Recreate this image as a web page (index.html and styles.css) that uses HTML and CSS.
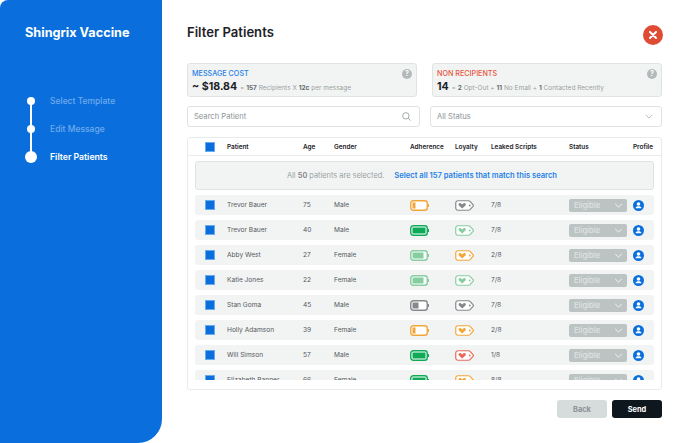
FILE: index.html
```html
<!DOCTYPE html>
<html lang="en">
<head>
  <meta charset="UTF-8" />
  <meta name="viewport" content="width=device-width, initial-scale=1" />
  <title>Filter Patients</title>
  <link rel="stylesheet" href="styles.css">
</head>
<body>
<svg class="sprites" width="0" height="0">
  <symbol id="batt-low" viewBox="0 0 19 11">
    <rect x="0.75" y="0.75" width="16.5" height="9.5" rx="2.5" fill="#fff" stroke="currentColor" stroke-width="1.4"/>
    <rect x="17.8" y="4" width="1.2" height="3" fill="currentColor"/>
    <rect x="2.5" y="2.5" width="3" height="6" fill="currentColor"/>
  </symbol>
  <symbol id="batt-half" viewBox="0 0 19 11">
    <rect x="0.75" y="0.75" width="16.5" height="9.5" rx="2.5" fill="#fff" stroke="currentColor" stroke-width="1.4"/>
    <rect x="17.8" y="4" width="1.2" height="3" fill="currentColor"/>
    <rect x="2.5" y="2.5" width="6" height="6" fill="currentColor"/>
  </symbol>
  <symbol id="batt-most" viewBox="0 0 19 11">
    <rect x="0.75" y="0.75" width="16.5" height="9.5" rx="2.5" fill="#fff" stroke="currentColor" stroke-width="1.4"/>
    <rect x="17.8" y="4" width="1.2" height="3" fill="currentColor"/>
    <rect x="2.5" y="2.5" width="11" height="6" fill="currentColor"/>
  </symbol>
  <symbol id="batt-full" viewBox="0 0 19 11">
    <rect x="0.75" y="0.75" width="16.5" height="9.5" rx="2.5" fill="#fff" stroke="currentColor" stroke-width="1.4"/>
    <rect x="17.8" y="4" width="1.2" height="3" fill="currentColor"/>
    <rect x="2.5" y="2.5" width="13" height="6" fill="currentColor"/>
  </symbol>
  <symbol id="tag" viewBox="0 0 19 11">
    <path d="M3 .75h10.5c.6 0 1.1.2 1.5.6l3 3.2c.4.5.4 1.4 0 1.900l-3 3.2c-.4.4-.9.6-1.500.6H3A2.200 2.200 0 0 1 .75 8V3A2.200 2.200 0 0 1 3 .75z" fill="#fff" stroke="currentColor" stroke-width="1.2"/>
    <path d="M7.200 8.600 3.900 5.400c-1.200-1.400.9-3.200 2.200-1.900l1.100 1 1.100-1c1.300-1.300 3.400.5 2.200 1.900z" fill="currentColor"/>
    <circle cx="14.800" cy="5.500" r=".9" fill="currentColor"/>
  </symbol>
  <symbol id="user" viewBox="0 0 11 11">
    <circle cx="5.500" cy="5.500" r="5.500" fill="#0a6fdc"/>
    <circle cx="5.500" cy="4" r="1.800" fill="#fff"/>
    <path d="M2.500 8.300c0-1.500 1.400-2.100 3-2.100s3 .6 3 2.100z" fill="#fff"/>
  </symbol>
  <symbol id="chev" viewBox="0 0 10 6">
    <path d="M1 1l4 4 4-4" fill="none" stroke="currentColor" stroke-width="1.200"/>
  </symbol>
</svg>

<div class="app">
  <aside class="sidebar">
    <h1 class="brand">Shingrix Vaccine</h1>
    <ul class="steps">
      <li class="step done">Select Template</li>
      <li class="step done">Edit Message</li>
      <li class="step active">Filter Patients</li>
    </ul>
  </aside>

  <main class="main">
    <header class="top">
      <h2 class="title">Filter Patients</h2>
      <button class="close" aria-label="Close">
        <svg width="8" height="8" viewBox="0 0 8 8"><path d="M1 1l6 6M7 1L1 7" stroke="#fff" stroke-width="2" stroke-linecap="round"/></svg>
      </button>
    </header>

    <section class="cards">
      <div class="card">
        <div class="card-label blue">MESSAGE COST</div>
        <div class="card-line"><strong class="big">~ $18.84</strong> = <b>157</b> Recipients X <b>12c</b> per message</div>
        <span class="help">?</span>
      </div>
      <div class="card">
        <div class="card-label red">NON RECIPIENTS</div>
        <div class="card-line"><strong class="big">14</strong> = <b>2</b> Opt-Out + <b>11</b> No Email + <b>1</b> Contacted Recently</div>
        <span class="help">?</span>
      </div>
    </section>

    <section class="filters">
      <div class="field search">
        <span>Search Patient</span>
        <svg class="search-ico" width="9" height="9" viewBox="0 0 11 11"><circle cx="4.700" cy="4.700" r="3.900" fill="none" stroke="#9aa1a3" stroke-width="1.100"/><path d="M7.500 7.500l3 3" stroke="#9aa1a3" stroke-width="1.100"/></svg>
      </div>
      <div class="field status-filter">
        <span>All Status</span>
        <svg class="chev-grey" width="8" height="5"><use href="#chev"/></svg>
      </div>
    </section>

    <section class="table">
      <div class="grid head">
        <span class="check"></span><span>Patient</span><span>Age</span><span>Gender</span><span>Adherence</span><span>Loyalty</span><span>Leaked Scripts</span><span>Status</span><span>Profile</span>
      </div>
      <div class="table-body">
        <div class="banner"><span>All <b>50</b> patients are selected.</span><a class="select-all">Select all 157 patients that match this search</a></div>

        <div class="grid row">
          <span class="check"></span><span>Trevor Bauer</span><span>75</span><span>Male</span>
          <svg class="ico orange"><use href="#batt-low"/></svg><svg class="ico grey"><use href="#tag"/></svg>
          <span>7/8</span><span class="pill">Eligible<svg width="9" height="5"><use href="#chev"/></svg></span><svg class="avatar"><use href="#user"/></svg>
        </div>
        <div class="grid row">
          <span class="check"></span><span>Trevor Bauer</span><span>40</span><span>Male</span>
          <svg class="ico green"><use href="#batt-full"/></svg><svg class="ico mint"><use href="#tag"/></svg>
          <span>7/8</span><span class="pill">Eligible<svg width="9" height="5"><use href="#chev"/></svg></span><svg class="avatar"><use href="#user"/></svg>
        </div>
        <div class="grid row">
          <span class="check"></span><span>Abby West</span><span>27</span><span>Female</span>
          <svg class="ico mint"><use href="#batt-most"/></svg><svg class="ico orange"><use href="#tag"/></svg>
          <span>2/8</span><span class="pill">Eligible<svg width="9" height="5"><use href="#chev"/></svg></span><svg class="avatar"><use href="#user"/></svg>
        </div>
        <div class="grid row">
          <span class="check"></span><span>Katie Jones</span><span>22</span><span>Female</span>
          <svg class="ico mint"><use href="#batt-most"/></svg><svg class="ico mint"><use href="#tag"/></svg>
          <span>7/8</span><span class="pill">Eligible<svg width="9" height="5"><use href="#chev"/></svg></span><svg class="avatar"><use href="#user"/></svg>
        </div>
        <div class="grid row">
          <span class="check"></span><span>Stan Goma</span><span>45</span><span>Male</span>
          <svg class="ico grey"><use href="#batt-half"/></svg><svg class="ico grey"><use href="#tag"/></svg>
          <span>7/8</span><span class="pill">Eligible<svg width="9" height="5"><use href="#chev"/></svg></span><svg class="avatar"><use href="#user"/></svg>
        </div>
        <div class="grid row">
          <span class="check"></span><span>Holly Adamson</span><span>39</span><span>Female</span>
          <svg class="ico orange"><use href="#batt-low"/></svg><svg class="ico orange"><use href="#tag"/></svg>
          <span>2/8</span><span class="pill">Eligible<svg width="9" height="5"><use href="#chev"/></svg></span><svg class="avatar"><use href="#user"/></svg>
        </div>
        <div class="grid row">
          <span class="check"></span><span>Will Simson</span><span>57</span><span>Male</span>
          <svg class="ico green"><use href="#batt-full"/></svg><svg class="ico red"><use href="#tag"/></svg>
          <span>1/8</span><span class="pill">Eligible<svg width="9" height="5"><use href="#chev"/></svg></span><svg class="avatar"><use href="#user"/></svg>
        </div>
        <div class="grid row">
          <span class="check"></span><span>Elizabeth Banner</span><span>66</span><span>Female</span>
          <svg class="ico green"><use href="#batt-full"/></svg><svg class="ico orange"><use href="#tag"/></svg>
          <span>8/8</span><span class="pill">Eligible<svg width="9" height="5"><use href="#chev"/></svg></span><svg class="avatar"><use href="#user"/></svg>
        </div>
      </div>
    </section>

    <footer class="actions">
      <button class="btn back">Back</button>
      <button class="btn send">Send</button>
    </footer>
  </main>
</div>
</body>
</html>
```

FILE: styles.css
```css
* { box-sizing: border-box; }

html, body {
  margin: 0;
  height: 100%;
}

body {
  background: #fff;
  color: #1d2226;
  font-family: Inter, "Noto Sans", sans-serif;
  font-size: 7px;
  overflow: hidden;
}

.sprites { display: block; height: 0; }

.app {
  display: flex;
  width: 688px;
  height: 443px;
}

/* sidebar */
.sidebar {
  width: 162px;
  height: 443px;
  flex: none;
  background: #0a6fdc;
  border-radius: 8px 0 24px 0;
  padding: 25px 0 0 25px;
}
.brand {
  margin: 0;
  color: #fff;
  font-size: 12.7px;
  line-height: 15px;
  font-weight: 700;
}
.steps {
  list-style: none;
  margin: 47px 0 0;
  padding: 0;
  color: #70aaee;
  font-size: 8.5px;
  font-weight: 500;
}
.step {
  display: flex;
  align-items: center;
  height: 28px;
  padding-left: 25px;
  position: relative;
}
.step::before {
  content: "";
  position: absolute;
  left: 2px;
  top: 10px;
  width: 8px;
  height: 8px;
  border-radius: 50%;
  background: #fff;
}
.step.done::after {
  content: "";
  position: absolute;
  left: 5px;
  top: 14px;
  width: 2px;
  height: 28px;
  background: #fff;
}
.step.active { color: #fff; font-weight: 600; font-size: 8.7px; }
.step.active::before {
  left: 0;
  top: 8px;
  width: 12px;
  height: 12px;
}

/* main */
.main {
  width: 526px;
  padding: 0 26px 0 25px;
  flex: none;
}
.top {
  display: flex;
  justify-content: space-between;
  align-items: flex-start;
  height: 63px;
  padding-top: 24px;
}
.title {
  margin: 0;
  font-size: 13.1px;
  line-height: 16px;
  font-weight: 600;
}
.close {
  width: 20px;
  height: 20px;
  margin: 1px -1px 0 0;
  border: 0;
  padding: 0;
  border-radius: 50%;
  background: #e04b33;
  display: flex;
  align-items: center;
  justify-content: center;
}

.cards {
  display: grid;
  grid-template-columns: 230px 230px;
  justify-content: space-between;
}
.card {
  height: 34px;
  background: #f2f4f4;
  border: 1px solid #dfe3e3;
  border-radius: 3px;
  padding: 5px 4px 0;
  position: relative;
  color: #999fa1;
  font-size: 6.5px;
}
.card-label {
  font-size: 7.2px;
  line-height: 9px;
  font-weight: 500;
}
.blue { color: #1f7fe6; }
.red { color: #e5553d; }
.card-line { margin-top: 2px; line-height: 13px; white-space: nowrap; }
.card-line b { color: #666c6f; font-weight: 700; }
.big {
  color: #1d2226;
  font-size: 10.6px;
  font-weight: 700;
  margin-right: 1px;
}
.help {
  position: absolute;
  top: 5px;
  right: 4px;
  width: 10px;
  height: 10px;
  border-radius: 50%;
  background: #b2b9ba;
  color: #fff;
  font-size: 7px;
  line-height: 10px;
  font-weight: 700;
  text-align: center;
}

.filters {
  display: grid;
  grid-template-columns: 233px 232px;
  justify-content: space-between;
  margin-top: 9px;
}
.field {
  height: 21px;
  border: 1px solid #dfe3e3;
  border-radius: 3px;
  padding: 0 6px;
  display: flex;
  align-items: center;
  justify-content: space-between;
  color: #8d9396;
  font-size: 7.6px;
}
.search-ico { margin-right: 2px; }
.chev-grey { color: #b8bdbf; margin-right: 2px; }

/* table */
.table {
  height: 253px;
  margin-top: 10px;
  border: 1px solid #e9ecec;
  border-radius: 3px;
  padding-bottom: 9px;
  display: flex;
  flex-direction: column;
}
.grid {
  display: grid;
  grid-template-columns: 22px 76px 31px 76px 45px 36px 78px 64px 1fr;
  align-items: center;
}
.head {
  flex: none;
  height: 18px;
  padding-left: 17px;
  border-bottom: 1px solid #e9ecec;
  font-size: 6.4px;
  font-weight: 600;
}

.table-body {
  flex: 1;
  min-height: 0;
  overflow: hidden;
  padding: 5px 7px 0;
}
.banner {
  height: 29px;
  background: #f2f4f4;
  border: 1px solid #dfe3e3;
  border-radius: 3px;
  display: flex;
  align-items: center;
  justify-content: center;
  gap: 10px;
  padding-right: 5px;
  margin-bottom: 5px;
  color: #999fa1;
  font-size: 7.4px;
}
.banner b { color: #7d8386; font-weight: 600; }
.select-all {
  color: #1f7fe6;
  font-size: 7.6px;
  font-weight: 600;
}
.row {
  height: 20px;
  margin-bottom: 5px;
  padding-left: 10px;
  background: #f2f4f4;
  border-radius: 3px;
  color: #55595c;
  font-size: 6.6px;
}
.check {
  width: 10px;
  height: 10px;
  background: #0a6fdc;
  border: 1px solid #6ba9ee;
}
.ico { width: 19px; height: 11px; display: block; }
.orange { color: #f2a63a; }
.green { color: #0fa958; }
.mint { color: #86cd9f; }
.grey { color: #85898b; }
.red.ico { color: #e8695a; }
.pill {
  width: 58px;
  height: 13px;
  background: #bcc3c3;
  border-radius: 2px;
  color: #dfe3e3;
  font-size: 7.6px;
  font-weight: 500;
  padding: 0 4px 0 5px;
  display: flex;
  align-items: center;
  justify-content: space-between;
}
.pill svg { color: #f1f3f3; }
.avatar { width: 11px; height: 11px; display: block; }

.actions {
  display: flex;
  justify-content: flex-end;
  gap: 5px;
  margin-top: 10px;
}
.btn {
  width: 50px;
  height: 18px;
  border: 0;
  padding: 0;
  border-radius: 3px;
  font-family: inherit;
  font-size: 7.4px;
  font-weight: 700;
}
.back { background: #d6dbdb; color: #8d9396; }
.send { background: #0e161e; color: #fff; }
```
